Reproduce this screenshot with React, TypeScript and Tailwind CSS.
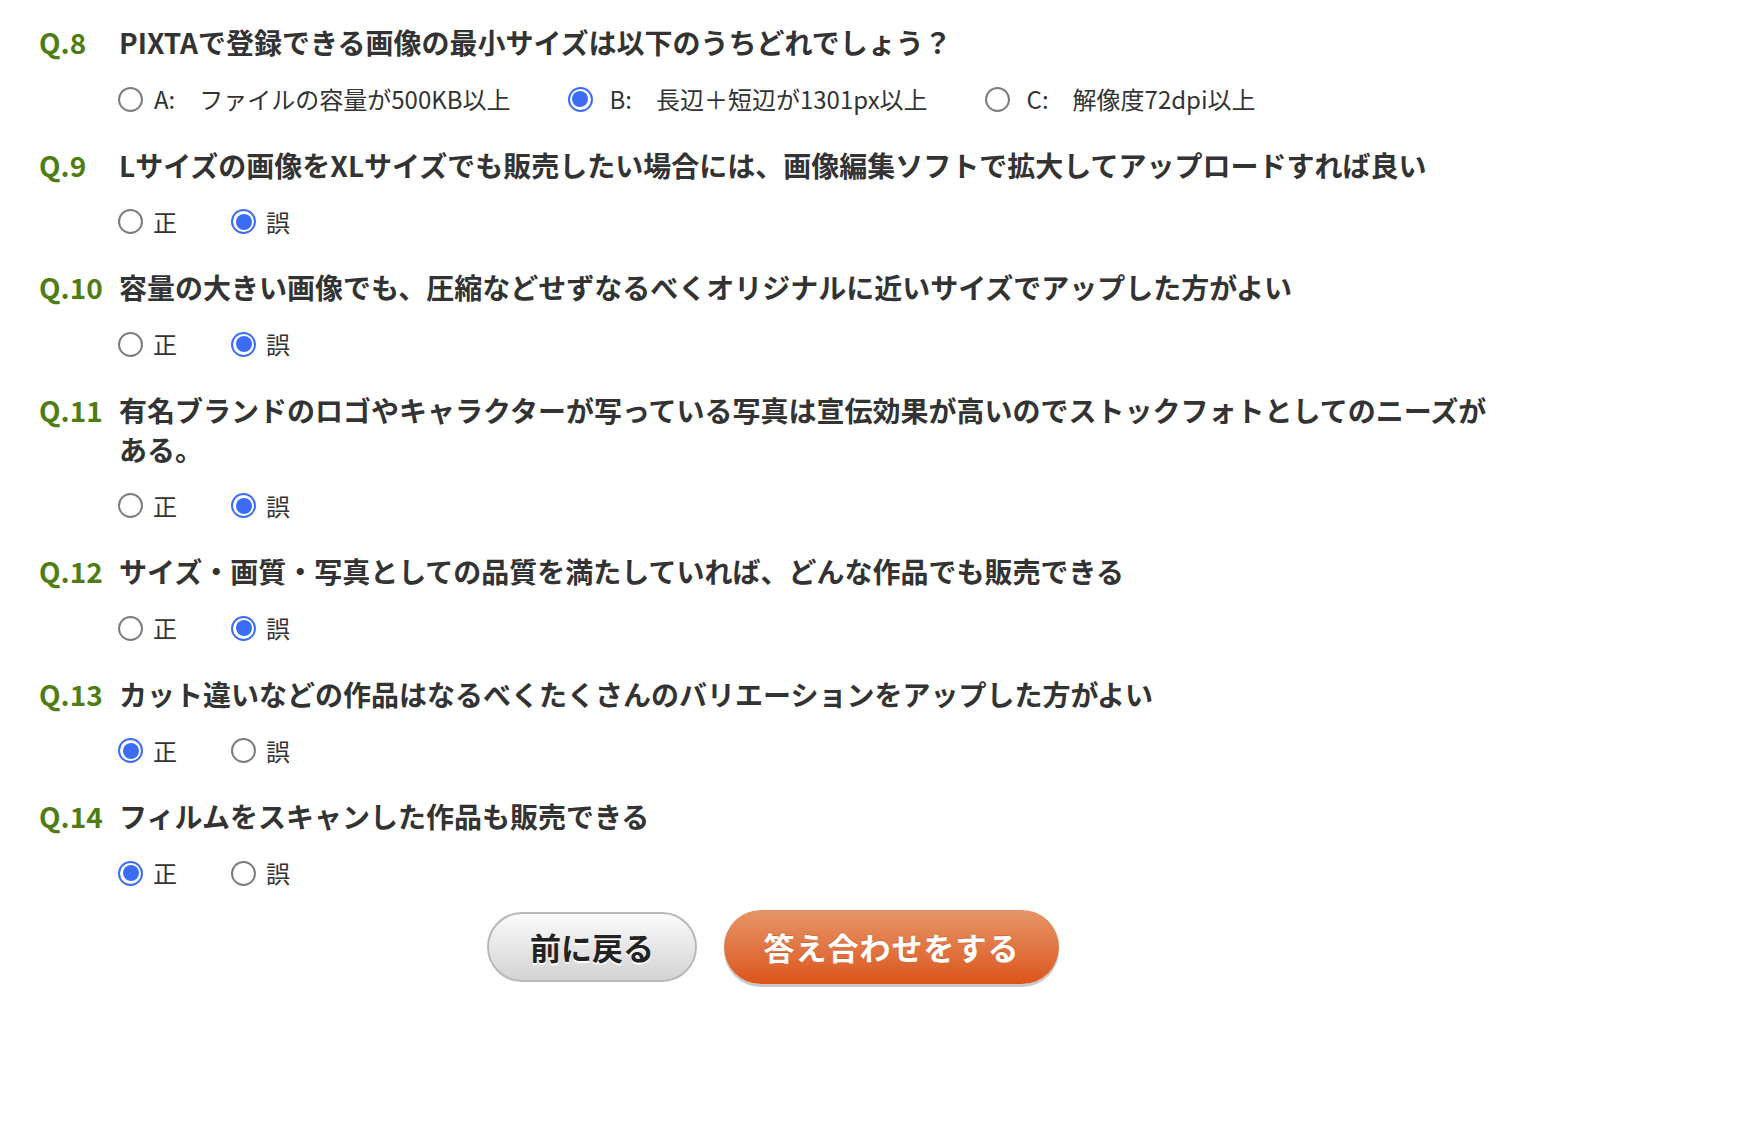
import React from 'react';

type Choice = { key?: string; text: string; gap?: string };
type Question = { no: string; text: string; choices: Choice[]; selected: number };

const QUESTIONS: Question[] = [
  {
    no: 'Q.8',
    text: 'PIXTAで登録できる画像の最小サイズは以下のうちどれでしょう？',
    choices: [
      { key: 'A:', text: 'ファイルの容量が500KB以上', gap: 'ml-[11px]' },
      { key: 'B:', text: '長辺＋短辺が1301px以上', gap: 'ml-[17px]' },
      { key: 'C:', text: '解像度72dpi以上', gap: 'ml-[17px]' },
    ],
    selected: 1,
  },
  {
    no: 'Q.9',
    text: 'Lサイズの画像をXLサイズでも販売したい場合には、画像編集ソフトで拡大してアップロードすれば良い',
    choices: [{ text: '正' }, { text: '誤' }],
    selected: 1,
  },
  {
    no: 'Q.10',
    text: '容量の大きい画像でも、圧縮などせずなるべくオリジナルに近いサイズでアップした方がよい',
    choices: [{ text: '正' }, { text: '誤' }],
    selected: 1,
  },
  {
    no: 'Q.11',
    text: '有名ブランドのロゴやキャラクターが写っている写真は宣伝効果が高いのでストックフォトとしてのニーズがある。',
    choices: [{ text: '正' }, { text: '誤' }],
    selected: 1,
  },
  {
    no: 'Q.12',
    text: 'サイズ・画質・写真としての品質を満たしていれば、どんな作品でも販売できる',
    choices: [{ text: '正' }, { text: '誤' }],
    selected: 1,
  },
  {
    no: 'Q.13',
    text: 'カット違いなどの作品はなるべくたくさんのバリエーションをアップした方がよい',
    choices: [{ text: '正' }, { text: '誤' }],
    selected: 0,
  },
  {
    no: 'Q.14',
    text: 'フィルムをスキャンした作品も販売できる',
    choices: [{ text: '正' }, { text: '誤' }],
    selected: 0,
  },
];

const Radio = ({ checked }: { checked: boolean }) =>
  checked ? (
    <span className="w-[25px] h-[25px] shrink-0 rounded-full border-[2.5px] border-[#3b6cf6] bg-white p-[2.5px] flex">
      <span className="w-full h-full rounded-full bg-[#3b6cf6]" />
    </span>
  ) : (
    <span className="w-[25px] h-[25px] shrink-0 rounded-full border-2 border-[#7c7c7c] bg-white" />
  );

export default function App() {
  return (
    <div
      className="min-h-[1148px] bg-white text-[#333] pt-[23px] px-[39px]"
      style={{ fontFamily: '"Noto Sans CJK JP", "Noto Sans", sans-serif' }}
    >
      <div className="w-[1468px] flex flex-col gap-[28.5px]">
        {QUESTIONS.map((q) => {
          const multi = q.choices.length > 2;
          return (
            <div key={q.no}>
              {/* question line */}
              <div className="flex text-[28px] font-bold leading-[39px]">
                <span className="w-[80px] shrink-0 text-[#4e7d14]">{q.no}</span>
                <span className="flex-1">{q.text}</span>
              </div>

              {/* choices */}
              <div
                className={
                  multi
                    ? 'mt-[19px] h-[36px] pl-[79px] flex items-center gap-[57px] text-[24px] leading-[36px]'
                    : 'mt-[19px] h-[36px] pl-[79px] flex items-center gap-[54px] text-[24px] leading-[36px]'
                }
              >
                {q.choices.map((c, i) => (
                  <label key={i} className="flex items-center">
                    <Radio checked={q.selected === i} />
                    {c.key && <span className={c.gap}>{c.key}</span>}
                    <span className={c.key ? 'ml-[24px]' : 'ml-[10px]'}>{c.text}</span>
                  </label>
                ))}
              </div>
            </div>
          );
        })}
      </div>

      {/* buttons */}
      <div className="w-[1468px] mt-[21px] flex justify-center items-start gap-[27px]">
        <button className="w-[210px] h-[70px] rounded-full border-2 border-[#b9b9b9] bg-linear-to-b from-[#fbfbfb] to-[#d3d3d3] text-[31px] font-bold text-[#222] [text-shadow:0_2px_0_#fff]">
          前に戻る
        </button>
        <button className="w-[335px] h-[74px] -mt-[2px] rounded-full bg-linear-to-b from-[#e59565] to-[#db5418] shadow-[0_3px_0_#c9c9c9] text-[31px] font-bold text-white tracking-[1px] [text-shadow:0_-1px_0_rgba(0,0,0,0.15)]">
          答え合わせをする
        </button>
      </div>
    </div>
  );
}
